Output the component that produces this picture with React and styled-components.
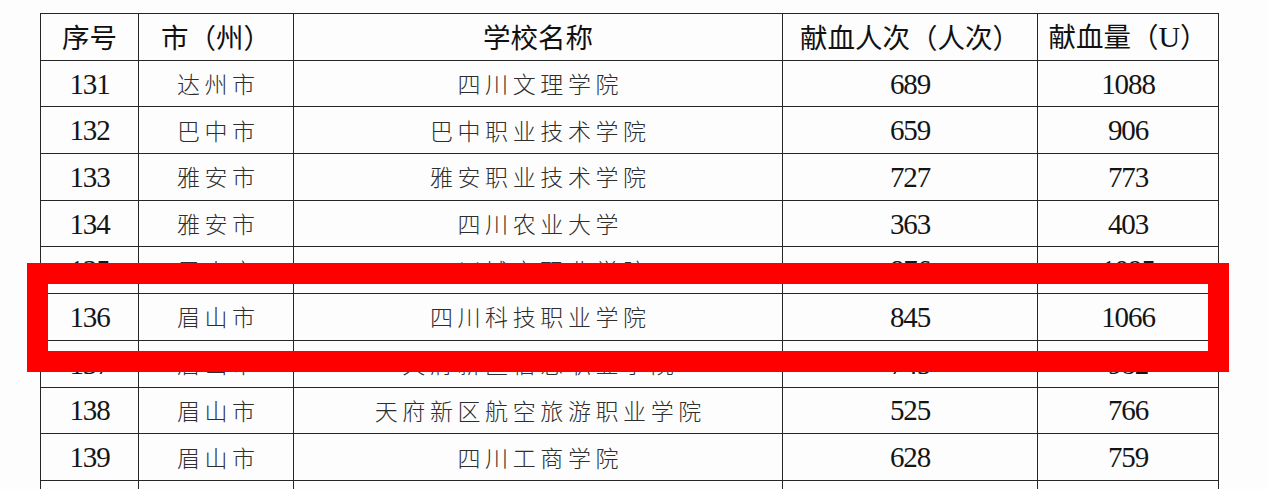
import React from "react";
import styled, { createGlobalStyle } from "styled-components";

const GlobalStyle = createGlobalStyle`
  html, body {
    margin: 0;
    padding: 0;
    background: #ffffff;
    overflow: hidden;
  }
  body {
    font-family: "Noto Sans CJK SC", "Noto Sans", sans-serif;
    color: #1c1c1c;
  }
`;

const Page = styled.div`
  position: relative;
  width: 1268px;
  height: 489px;
  padding: 13px 0 0 40px;
  box-sizing: border-box;
  overflow: hidden;
  background: #fdfdfd;
`;

const Table = styled.table`
  border-collapse: collapse;
  table-layout: fixed;
  width: 1178px;
`;

const Col = styled.col`
  width: ${(p) => p.$w}px;
`;

const Row = styled.tr`
  height: 46.7px;
`;

const HeadCell = styled.th`
  border: 1.6px solid #262626;
  padding: 0;
  font-family: "Noto Sans CJK SC", sans-serif;
  font-weight: 400;
  font-size: 27.5px;
  line-height: 1;
  color: #111111;
  text-align: center;
  vertical-align: middle;
  white-space: nowrap;
`;

const Latin = styled.span`
  font-family: "Liberation Serif", serif;
  font-size: 30px;
  font-weight: 400;
`;

const Cell = styled.td`
  border: 1.6px solid #262626;
  padding: 0;
  text-align: center;
  vertical-align: middle;
  white-space: nowrap;
  line-height: 1;
  ${(p) =>
    p.$kind === "num"
      ? `
    font-family: "Liberation Serif", "Times New Roman", serif;
    font-size: 29px;
    letter-spacing: -1.1px;
    color: #141414;
    padding-top: 1px;
  `
      : `
    font-family: "Noto Sans CJK SC", sans-serif;
    font-weight: 300;
    font-size: 23px;
    letter-spacing: 4.6px;
    text-indent: 4.6px;
    color: #2e2e2e;
  `}
`;

const Highlight = styled.div`
  position: absolute;
  left: 27px;
  top: 263px;
  width: 1202px;
  height: 109px;
  box-sizing: border-box;
  border: 21px solid #ff0000;
  pointer-events: none;
`;

const columns = [98, 155, 489, 255, 181];

const rows = [
  ["131", "达州市", "四川文理学院", "689", "1088"],
  ["132", "巴中市", "巴中职业技术学院", "659", "906"],
  ["133", "雅安市", "雅安职业技术学院", "727", "773"],
  ["134", "雅安市", "四川农业大学", "363", "403"],
  ["135", "眉山市", "四川城市职业学院", "876", "1095"],
  ["136", "眉山市", "四川科技职业学院", "845", "1066"],
  ["137", "眉山市", "天府新区信息职业学院", "745", "982"],
  ["138", "眉山市", "天府新区航空旅游职业学院", "525", "766"],
  ["139", "眉山市", "四川工商学院", "628", "759"],
  ["", "", "", "", ""],
];

export default function App() {
  return (
    <>
      <GlobalStyle />
      <Page>
        <Table>
          <colgroup>
            {columns.map((w, i) => (
              <Col key={i} $w={w} />
            ))}
          </colgroup>
          <thead>
            <Row>
              <HeadCell>序号</HeadCell>
              <HeadCell>市（州）</HeadCell>
              <HeadCell>学校名称</HeadCell>
              <HeadCell>献血人次（人次）</HeadCell>
              <HeadCell>
                献血量（<Latin>U</Latin>）
              </HeadCell>
            </Row>
          </thead>
          <tbody>
            {rows.map((r, i) => (
              <Row key={i}>
                <Cell $kind="num">{r[0]}</Cell>
                <Cell $kind="cjk">{r[1]}</Cell>
                <Cell $kind="cjk">{r[2]}</Cell>
                <Cell $kind="num">{r[3]}</Cell>
                <Cell $kind="num">{r[4]}</Cell>
              </Row>
            ))}
          </tbody>
        </Table>
        <Highlight />
      </Page>
    </>
  );
}
